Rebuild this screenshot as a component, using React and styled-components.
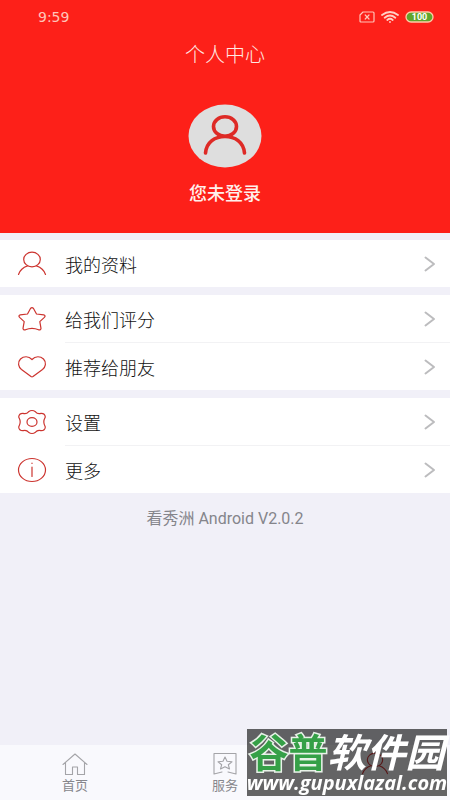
import React from 'react';
import styled, { createGlobalStyle } from 'styled-components';

const Global = createGlobalStyle`
  * { box-sizing: border-box; }
  body { margin: 0; background: #f1f0f8; font-family: Roboto, "Noto Sans CJK SC", sans-serif; }
`;

const Page = styled.div`
  min-height: 100vh;
  display: flex;
  flex-direction: column;
`;

const Header = styled.header`
  background: #fd2019;
  color: #ffe9e4;
  display: flex;
  flex-direction: column;
  padding-bottom: 25px;
`;

const StatusBar = styled.div`
  display: flex;
  align-items: center;
  justify-content: space-between;
  height: 34px;
  padding: 0 16px 0 38px;
  font-family: "DejaVu Sans", sans-serif;
  font-size: 14px;
  color: #ffc4b8;
`;

const StatusIcons = styled.div`
  display: flex;
  align-items: center;
  gap: 6px;
`;

const Title = styled.h1`
  margin: 0;
  height: 42px;
  line-height: 42px;
  text-align: center;
  font-size: 20px;
  font-weight: 300;
`;

const Profile = styled.button`
  align-self: center;
  display: flex;
  flex-direction: column;
  align-items: center;
  gap: 12px;
  margin-top: 28px;
  padding: 0;
  border: 0;
  background: none;
  color: #fff0ec;
  font: inherit;
  font-size: 18px;
  font-weight: 500;
  line-height: 28px;
`;

const Main = styled.main`
  flex: 1;
  display: flex;
  flex-direction: column;
  gap: 8px;
  padding-top: 7px;
`;

const Group = styled.section`
  background: #fff;
`;

const Row = styled.button`
  width: 100%;
  display: flex;
  align-items: center;
  padding: 0 0 0 17px;
  border: 0;
  background: none;
  color: #111;
  font: inherit;
  font-size: 18px;
  font-weight: 300;
  text-align: left;
`;

const RowBody = styled.span`
  flex: 1;
  display: flex;
  align-items: center;
  justify-content: space-between;
  height: ${(p) => (p.$divided ? 48 : 47)}px;
  margin-left: 18px;
  padding-right: 14px;
  border-bottom: ${(p) => (p.$divided ? '1px solid #f2f2f4' : '0')};
`;

const Version = styled.p`
  margin: 8px 0 0;
  text-align: center;
  color: #85858b;
  font-size: 16px;
  line-height: 20px;
`;

const TabBar = styled.nav`
  position: sticky;
  bottom: 0;
  display: grid;
  grid-template-columns: repeat(3, 1fr);
  height: 55px;
  background: #f9f9fd;
`;

const Tab = styled.button`
  display: flex;
  flex-direction: column;
  align-items: center;
  gap: 1px;
  padding: 7px 0 0;
  border: 0;
  background: none;
  color: #87878c;
  font: inherit;
  font-size: 13px;
  line-height: 18px;
`;

const Watermark = styled.aside`
  position: fixed;
  right: 3px;
  bottom: 4px;
  width: 200px;
  height: 67px;
  background: rgba(0, 0, 0, 0.6);
  color: #fff;
  text-align: center;
  pointer-events: none;
`;

const WatermarkName = styled.div`
  display: flex;
  justify-content: center;
  padding-top: 7px;
  font-size: 39px;
  font-weight: 700;
  line-height: 36px;
  white-space: nowrap;
`;

const Green = styled.span`
  color: #35a047;
  paint-order: stroke fill;
  -webkit-text-stroke: 3px #e8f2e8;
`;

const White = styled.span`
  font-style: italic;
`;

const WatermarkUrl = styled.div`
  display: flex;
  justify-content: center;
  font-family: "Open Sans", sans-serif;
  font-size: 20px;
  font-weight: 700;
  font-style: italic;
  line-height: 22px;
`;

const Line = styled.svg`
  display: block;
  flex: none;
  fill: none;
  stroke: ${(p) => p.$color || '#cc342f'};
  stroke-width: ${(p) => p.$weight || 1.2};
  stroke-linecap: round;
  stroke-linejoin: round;
`;

const icons = {
  person: <><ellipse cx="15" cy="8.5" rx="8.3" ry="7.3" /><path d="M1.5 23.5C3 19 6.5 16.2 10.5 14.9M19.5 14.9C23.5 16.2 27 19 28.5 23.5" /></>,
  star: <path d="M13.5 2.5Q15 .8 16.5 2.5L19.5 8L26.8 8.9Q29 9.8 27.4 11.4L22.8 15.6L24 22.4Q23.8 24.4 21.6 23.8Q15 20.8 8.4 23.8Q6.2 24.4 6 22.4L7.2 15.6L2.6 11.4Q1 9.8 3.2 8.9L10.5 8Z" />,
  heart: <path d="M15 5.5C11.5 1.6 6.5 2.2 3.5 5C.2 8.4 1.4 13 4.5 15.5L14 22.6Q15 23.3 16 22.6L25.5 15.5C28.6 13 29.8 8.4 26.5 5C23.5 2.2 18.5 1.6 15 5.5Z" />,
  gear: <><path d="M11.5 2.8Q15 .2 18.5 2.8Q20.5 5.3 24 4.3Q28 4.2 28.3 8Q26.8 10.8 26.8 13Q26.8 15.2 28.3 18Q28 21.8 24 21.7Q20.5 20.7 18.5 23.2Q15 25.8 11.5 23.2Q9.5 20.7 6 21.7Q2 21.8 1.7 18Q3.2 15.2 3.2 13Q3.2 10.8 1.7 8Q2 4.2 6 4.3Q9.5 5.3 11.5 2.8Z" /><ellipse cx="15" cy="13" rx="5" ry="4.4" /></>,
  info: <><ellipse cx="15" cy="13" rx="13.5" ry="11.5" /><path d="M15 10V19.5M15 6.2V6.4" /></>,
};

const groups = [
  [['person', '我的资料']],
  [['star', '给我们评分'], ['heart', '推荐给朋友']],
  [['gear', '设置'], ['info', '更多']],
];

const MenuRow = ({ icon, label, divided }) => (
  <Row type="button">
    <Line width="30" height="26" viewBox="0 0 30 26">{icons[icon]}</Line>
    <RowBody $divided={divided}>
      {label}
      <Line width="12" height="16" viewBox="0 0 12 16" $color="#bcbcbe" $weight={2}><path d="M1.5 1.5L10 8L1.5 14.5" /></Line>
    </RowBody>
  </Row>
);

export default function App() {
  return (
    <Page>
      <Global />
      <Header>
        <StatusBar>
          <span>9:59</span>
          <StatusIcons>
            <Line width="16" height="12" viewBox="0 0 16 12" $color="#ffc4b8"><path d="M4 1H14Q15 1 15 2V10Q15 11 14 11H2Q1 11 1 10V4ZM6.2 4L10 8M10 4L6.2 8" /></Line>
            <Line width="18" height="12" viewBox="0 0 18 12" $color="#ffd0c6" $weight={1.8}><path d="M1 4Q9-2 17 4M3.7 6.7Q9 2.3 14.3 6.7M6.3 9Q9 6.6 11.7 9M9 11V11.1" /></Line>
            <svg width="29" height="12" viewBox="0 0 29 12" role="img" aria-label="100">
              <rect x="1" y="1" width="27" height="10" rx="5" fill="#5fa52c" stroke="#ffc9a8" strokeWidth="1.3" />
              <text x="14.5" y="9.4" textAnchor="middle" fontFamily="Roboto, sans-serif" fontSize="9" fontWeight="700" fill="#fff">100</text>
            </svg>
          </StatusIcons>
        </StatusBar>
        <Title>个人中心</Title>
        <Profile type="button">
          <svg width="74" height="64" viewBox="0 0 74 64">
            <ellipse cx="37" cy="32" rx="36.5" ry="31.5" fill="#dedede" />
            <g fill="none" stroke="#de2a26" strokeWidth="3.6" strokeLinecap="round">
              <ellipse cx="37" cy="22.5" rx="11.5" ry="9.8" />
              <path d="M17.5 49C18.5 38 27 32.5 37 32.5S55.5 38 56.5 49" />
            </g>
          </svg>
          您未登录
        </Profile>
      </Header>
      <Main>
        {groups.map((rows) => (
          <Group key={rows[0][1]}>
            {rows.map(([icon, label], i) => (
              <MenuRow key={label} icon={icon} label={label} divided={i < rows.length - 1} />
            ))}
          </Group>
        ))}
        <Version>看秀洲 Android V2.0.2</Version>
      </Main>
      <TabBar>
        <Tab type="button">
          <Line width="28" height="24" viewBox="0 0 28 24" $color="#a4a4a8" $weight={1.1}><path d="M2 12.5L14 2L26 12.5M4.5 11V22.5H11.5V15H16.5V22.5H23.5V11" /></Line>
          首页
        </Tab>
        <Tab type="button">
          <Line width="28" height="24" viewBox="0 0 28 24" $color="#a4a4a8" $weight={1.1}><path d="M11 20L3 22V1.5H25V22L17 20M14 5L16 9.3L21 9.8L17.3 12.7L18.5 17L14 14.7L9.5 17L10.7 12.7L7 9.8L12 9.3Z" /></Line>
          服务
        </Tab>
        <Tab type="button" aria-label="个人中心">
          <Line width="28" height="24" viewBox="0 0 30 26" $color="#d63a3a">{icons.person}</Line>
        </Tab>
      </TabBar>
      <Watermark>
        <WatermarkName><Green>谷普</Green><White>软件园</White></WatermarkName>
        <WatermarkUrl>www.gupuxlazal.com</WatermarkUrl>
      </Watermark>
    </Page>
  );
}
